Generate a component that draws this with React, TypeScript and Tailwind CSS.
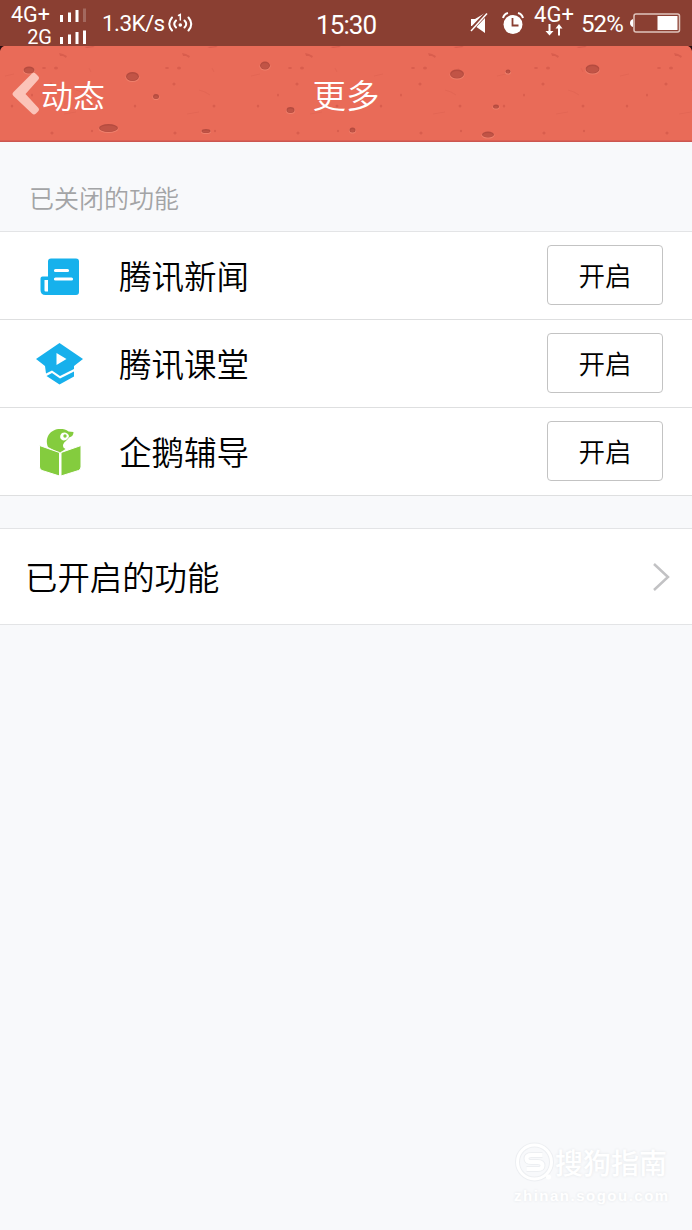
import type { ReactNode } from "react";

const cjk = "font-['Noto_Sans_CJK_SC','Noto_Sans',sans-serif]";

const craters = [
  { x: 29, y: 24, rx: 5.5, ry: 3.5 },
  { x: 132.5, y: 30.5, rx: 6.5, ry: 4.5 },
  { x: 156, y: 50.5, rx: 3, ry: 2.5 },
  { x: 108.5, y: 82, rx: 9.5, ry: 4 },
  { x: 206, y: 85, rx: 4.5, ry: 2 },
  { x: 265, y: 19.5, rx: 5, ry: 4 },
  { x: 290.5, y: 64, rx: 4, ry: 3 },
  { x: 352.5, y: 84, rx: 3, ry: 2.5 },
  { x: 457, y: 28, rx: 7, ry: 4.5 },
  { x: 508, y: 25.5, rx: 2.5, ry: 2 },
  { x: 496, y: 60.5, rx: 3, ry: 2 },
  { x: 488, y: 88.5, rx: 6, ry: 3 },
  { x: 592.5, y: 23, rx: 7, ry: 4.5 },
];

function HeaderTexture() {
  return (
    <svg className="absolute inset-0" width="692" height="96" viewBox="0 0 692 96">
      <defs>
        <pattern id="specks" width="123" height="96" patternUnits="userSpaceOnUse">
          <g fill="#c94f42" opacity="0.5">
            <path d="M59 7l4 1 4 2-1 2-3-2-3 0z" />
            <path d="M84 1l9-1 2 1-8 1z" />
            <ellipse cx="56" cy="22" rx="2" ry="1.6" />
            <ellipse cx="44" cy="22" rx="2" ry="1" />
            <ellipse cx="51" cy="38" rx="1.6" ry="1.6" />
            <ellipse cx="52" cy="87" rx="1.6" ry="1.6" />
            <ellipse cx="91" cy="60" rx="1.5" ry="1.5" />
            <ellipse cx="12" cy="60" rx="1.3" ry="1.5" />
            <ellipse cx="32" cy="49" rx="1" ry="1.5" />
            <ellipse cx="92" cy="85" rx="1.2" ry="1.2" />
          </g>
          <g fill="none" stroke="#d65b4b" strokeWidth="1.2" opacity="0.35">
            <path d="M76 44l6 2 5 3M89 22l2 4M5 30l9-2M64 68l12-2" />
          </g>
        </pattern>
      </defs>
      <rect width="692" height="96" fill="#e96b58" />
      <rect width="692" height="96" fill="url(#specks)" />
      {craters.map((c) => (
        <g key={`${c.x}-${c.y}`}>
          <ellipse cx={c.x} cy={c.y + 0.8} rx={c.rx + 0.5} ry={c.ry + 0.3} fill="#ef806c" />
          <ellipse cx={c.x} cy={c.y} rx={c.rx} ry={c.ry} fill="#b54b3f" />
          <ellipse cx={c.x} cy={c.y + 0.4} rx={c.rx - 1} ry={c.ry - 1} fill="#c15446" />
        </g>
      ))}
      <rect y="94.5" width="692" height="1.500" fill="#cc5650" />
      <path d="M0 0h4q-3 1-4 5zM692 0h-4q3 1 4 5z" fill="#2a0d10" />
    </svg>
  );
}

function SignalBars({ weak = false }: { weak?: boolean }) {
  return (
    <svg width="28" height="14" viewBox="0 0 28 14" fill="#fff">
      <rect x="0" y="7" width="3" height="7" />
      <rect x="8" y="4.500" width="3" height="9.500" />
      <rect x="15.500" y="2" width="3" height="12" />
      <rect x="23" y="0.500" width="3" height="13.500" opacity={weak ? 0.22 : 1} />
    </svg>
  );
}

function StatusBar() {
  return (
    <div className="flex h-[46px] items-start bg-[#8a3f32] font-[Roboto,sans-serif] font-normal text-white">
      <div className="w-[88px] pt-1">
        <div className="flex h-[22px] items-center justify-end gap-1.5">
          <span className="w-[43px] text-[21.500px] leading-[22px]">4G+</span>
          <SignalBars weak />
        </div>
        <div className="flex h-[22px] items-center justify-end gap-2">
          <span className="text-[20px] leading-[22px]">2G</span>
          <SignalBars />
        </div>
      </div>
      <div className="flex h-[46px] w-[228px] items-center pt-0.5 pl-[14px]">
        <span className="w-[65px] text-[22.500px] tracking-[-0.6px] whitespace-nowrap">1.3K/s</span>
        <svg width="27" height="22" viewBox="0 0 27 22" fill="none" stroke="#fff" strokeWidth="2" strokeLinecap="round">
          <path d="M5 4.500q-5.500 6.500 0 13M9 7.500q-3.500 3.500 0 7M21.500 4.500q5.500 6.500 0 13M17.500 7.500q3.500 3.500 0 7" />
          <circle cx="13.300" cy="12" r="1.800" fill="#fff" stroke="none" />
          <path d="M11.500 2.500l1.800-1v5.500" strokeWidth="1.500" />
        </svg>
      </div>
      <span className="w-[154px] text-[26px] leading-[50px] tracking-[-0.9px]">15:30</span>
      <svg className="mt-3" width="18" height="22" viewBox="0 0 18 22">
        <path d="M1 7h4l10-6v20l-10-7H1z" fill="#fff" />
        <path d="M0 19L17 1" stroke="#8a3f32" strokeWidth="4" />
        <path d="M1 19L17 1.500" stroke="#fff" strokeWidth="1.500" />
      </svg>
      <svg className="mt-3 ml-[14px]" width="22" height="23" viewBox="0 0 22 23">
        <circle cx="11" cy="12.500" r="9.500" fill="#fff" />
        <path d="M1 6q1-4 5-5M21 6q-1-4-5-5" stroke="#fff" strokeWidth="2" fill="none" />
        <path d="M10.500 6v7.500h6" stroke="#8a3f32" strokeWidth="1.800" fill="none" />
      </svg>
      <div className="ml-[9px] flex w-[42px] flex-col items-center pt-1">
        <span className="text-[22px] leading-[22px]">4G+</span>
        <svg className="-mt-[2px]" width="18" height="12" viewBox="0 0 18 12" fill="#fff">
          <path d="M3.500 0h2v7H8.500L4.500 11.500.500 7h3zM13 11.500h2v-7h2.500L14 0l-3.500 4.500H13z" />
        </svg>
      </div>
      <span className="ml-[6px] w-[49px] text-[24px] leading-[49px] tracking-[-0.9px]">52%</span>
      <svg className="mt-[13px]" width="52" height="20" viewBox="0 0 52 20">
        <path d="M3 6Q0 7 0 10t3 4z" fill="#fff" />
        <rect x="4" y="1" width="45.500" height="18" rx="2" fill="none" stroke="#dfc5bd" strokeWidth="1.500" />
        <rect x="27.500" y="3" width="20" height="14" fill="#fff" />
      </svg>
    </div>
  );
}

function NewsIcon() {
  return (
    <svg width="46" height="46" viewBox="0 0 46 46">
      <path d="M14 5.500h25q3 0 3 3V39q0 3-3 3H8.500q-5 0-5-5V25.500q0-2 2-2H11v-15q0-3 3-3z" fill="#16b1ec" />
      <path d="M7.500 27h3.500v11.500H8.500q-1 0-1-1z" fill="#fff" />
      <path d="M18.500 17.500h12M18.500 26h16" stroke="#fff" strokeWidth="3.200" strokeLinecap="round" />
    </svg>
  );
}

function ClassIcon() {
  return (
    <svg width="48" height="46" viewBox="0 0 48 46">
      <path d="M23.500 2L47 18 38 25v3L24 35l-8-5.500-6 3L9 25 0 18z" fill="#17b0ec" />
      <path d="M10.500 35l5.500-3 8 5.500L38 30.500v5L23.500 43.500z" fill="#17b0ec" />
      <path d="M20.500 12l10 6-10 6z" fill="#fff" />
    </svg>
  );
}

function TutorIcon() {
  return (
    <svg width="44" height="50" viewBox="0 0 44 50">
      <path d="M10 20C6 10 13 2 22 2c4 0 6 .500 8.500 2.500l5 .500q0 4.500-4.500 5.500c-1.500 3-6 4.500-6 8.500q0 2 2.500 3l-6 4z" fill="#84cc3e" />
      <path d="M31 9c-1-4-7-5-8.500-1-1 3 .500 5 3 5.500 2.500 0 3.500-1 5-3z" fill="#fff" />
      <circle cx="27" cy="9" r="1.700" fill="#84cc3e" />
      <path d="M1.500 18.500L21.500 25.500V49L4 43.500q-2.500-1-2.500-3.500zM43 18.500L23 25.500V49l17.500-5.500q2.500-1 2.500-3.500z" fill="#84cc3e" stroke="#fff" />
    </svg>
  );
}

const features: { name: string; icon: ReactNode }[] = [
  { name: "腾讯新闻", icon: <NewsIcon /> },
  { name: "腾讯课堂", icon: <ClassIcon /> },
  { name: "企鹅辅导", icon: <TutorIcon /> },
];

function FeatureRow({ name, icon }: { name: string; icon: ReactNode }) {
  return (
    <div className="flex h-[88px] items-center border-b border-[#dedfe0] bg-white pr-[29px] pb-px pl-9">
      <div className="flex w-12 justify-center pt-0.5">{icon}</div>
      <span className="ml-[35px] flex-1 text-[32.500px] leading-[48px]">{name}</span>
      <button className="h-[60px] w-[116px] rounded-[4px] border border-[#c3c3c3] pb-px text-[26.500px]">
        开启
      </button>
    </div>
  );
}

function Watermark() {
  return (
    <div className="mr-[22px] mb-[22px] flex w-[156px] flex-col text-white [text-shadow:0_0_3px_#e1e4e7]">
      <div className="flex items-center">
        <svg width="41" height="42" viewBox="0 0 40 42" fill="none">
          <circle cx="20" cy="20" r="17" stroke="#edeff2" strokeWidth="5" />
          <circle cx="20" cy="20" r="17" stroke="#fff" strokeWidth="3" />
          <path d="M28 13H17q-5 0-5 3.500t5 3.500h6q5 0 5 3.500T23 27H12" stroke="#edeff2" strokeWidth="6" />
          <path d="M28 13H17q-5 0-5 3.500t5 3.500h6q5 0 5 3.500T23 27H12" stroke="#fff" strokeWidth="4" />
          <circle cx="34" cy="35" r="2.500" fill="#fff" />
        </svg>
        <span className="-mt-0.5 text-[28px] leading-[42px] font-medium whitespace-nowrap">搜狗指南</span>
      </div>
      <span className="font-['Liberation_Sans',sans-serif] text-[15px] leading-6 font-bold tracking-[1.5px]">
        zhinan.sogou.com
      </span>
    </div>
  );
}

export default function App() {
  return (
    <div className={`flex h-[1230px] w-[692px] flex-col overflow-hidden bg-[#f8f9fb] font-[350] text-black ${cjk}`}>
      <StatusBar />
      <header className="relative h-24 text-white">
        <HeaderTexture />
        <div className="relative grid h-full grid-cols-[1fr_auto_1fr] items-center pb-px">
          <div className="flex items-center pl-3">
            <svg width="29" height="46" viewBox="0 0 29 46">
              <path
                d="M20 2.500Q22 1 24 3l2 2q2 2 0 4L13.500 23 26 36.500q2 2 0 4l-2 2q-2 2-4 0L1.500 25q-2-2 0-4z"
                fill="#fbc4b9"
              />
            </svg>
            <span className="text-[32px] leading-[48px]">动态</span>
          </div>
          <h1 className="text-[33.500px] leading-[48px]">更多</h1>
        </div>
      </header>

      <main className="flex-1">
        <h2 className="h-[90px] border-b border-[#e3e4e6] pt-[36px] pl-[29px] text-[25px] leading-[38px] text-[#a3a4a6]">
          已关闭的功能
        </h2>
        {features.map((f) => (
          <FeatureRow key={f.name} name={f.name} icon={f.icon} />
        ))}

        <div className="mt-8 flex h-[97px] items-center justify-between border-y border-[#e3e4e6] bg-white pr-[22px] pl-[25px]">
          <span className="pb-px text-[32.400px] leading-[48px]">已开启的功能</span>
          <svg width="18" height="30" viewBox="0 0 18 30" fill="none" stroke="#c2c2c4" strokeWidth="2.500">
            <path d="M2 2l14 13L2 28" />
          </svg>
        </div>
      </main>

      <footer className="flex justify-end">
        <Watermark />
      </footer>
    </div>
  );
}
